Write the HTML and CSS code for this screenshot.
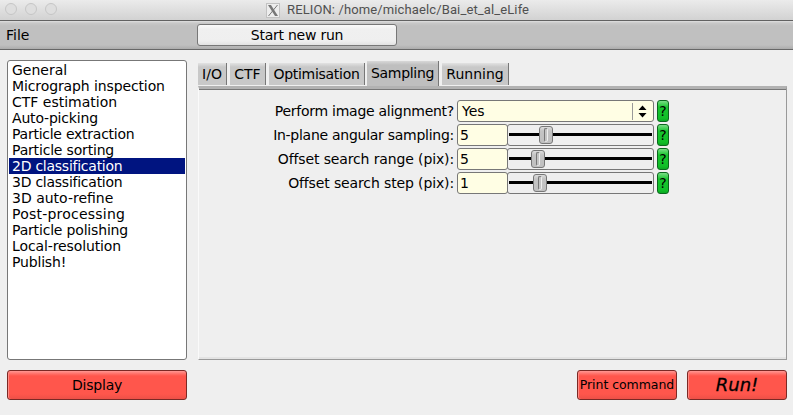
FILE: index.html
```
<!DOCTYPE html>
<html lang="en">
<head>
<meta charset="utf-8">
<title>RELION</title>
<link rel="stylesheet" href="styles.css">
</head>
<body>
<header class="titlebar">
  <div class="lights"><i></i><i></i><i></i></div>
  <svg class="xicon" width="14" height="15" viewBox="0 0 14 15"><rect x=".5" y=".5" width="13" height="14" fill="#ededed" stroke="#c2c2c2"/><path d="M2 2H5L12 13H9Z" fill="#777"/><path d="M11.500 2L2.500 13" stroke="#777" stroke-width="1"/></svg>
  <span class="title">RELION: /home/michaelc/Bai_et_al_eLife</span>
</header>
<nav class="menubar"><span class="file">File</span><button class="start">Start new run</button></nav>
<main class="main">
  <section class="left">
    <ul class="jobs">
      <li class="plain">General</li><li class="snug">Micrograph inspection</li><li class="plain">CTF estimation</li><li>Auto-picking</li><li class="tight">Particle extraction</li><li>Particle sorting</li><li class="selected tight">2D classification</li><li class="tight">3D classification</li><li class="plain">3D auto-refine</li><li class="loose">Post-processing</li><li>Particle polishing</li><li class="snug">Local-resolution</li><li>Publish!</li>
    </ul>
    <button class="red">Display</button>
  </section>
  <section class="right">
    <div class="tabs"><span class="tab io">I/O</span><span class="tab ctf">CTF</span><span class="tab opt">Optimisation</span><span class="tab sampling">Sampling</span><span class="tab running">Running</span></div>
    <div class="panel">
      <div class="row"><label>Perform image alignment?</label><div class="select"><span>Yes</span><svg width="21" height="20" viewBox="0 0 21 20"><path d="M.5 2V19" stroke="#999"/><path d="M6.500 9L10.500 4.500L14.500 9ZM6.500 12L10.500 16.500L14.500 12Z"/></svg></div><button class="help">?</button></div>
      <div class="row"><label>In-plane angular sampling:</label><div class="field">5</div><div class="slider"><i class="knob k1"></i></div><button class="help">?</button></div>
      <div class="row"><label class="offset">Offset search range (pix):</label><div class="field">5</div><div class="slider"><i class="knob k2"></i></div><button class="help">?</button></div>
      <div class="row"><label class="offset">Offset search step (pix):</label><div class="field">1</div><div class="slider"><i class="knob k3"></i></div><button class="help">?</button></div>
    </div>
    <div class="actions"><button class="red print">Print command</button><button class="red run">Run!</button></div>
  </section>
</main>
</body>
</html>
```
FILE: styles.css
```
*, *::before, *::after { box-sizing: border-box; }
body { margin: 0; width: 793px; height: 415px; overflow: hidden; background: #efefef; color: #000; font: 14px/16px "DejaVu Sans", sans-serif; }
button { margin: 0; padding: 0; color: #000; font: inherit; }
.titlebar { display: flex; height: 21px; border-bottom: 1px solid #626262; background: linear-gradient(#ebebeb, #d2d2d2); }
.lights { display: flex; gap: 8px; width: 266px; padding: 3px 0 0 5px; }
.lights i { width: 12px; height: 12px; border: 1px solid #c6c6c6; border-radius: 50%; background: #dedede; }
.xicon { margin-top: 3px; }
.title { margin-left: 7px; color: #505050; font: 13px/20px Roboto, sans-serif; letter-spacing: .12px; white-space: nowrap; }
.menubar { display: flex; align-items: flex-start; height: 29px; border-bottom: 1px solid #686868; background: linear-gradient(#e0e0e0, #c8c8c8 2px, #c0c0c0 5px, #c0c0c0 24px, #acacac); }
.file { width: 197px; padding: 6px 0 0 6px; }
.start { width: 200px; height: 22px; margin-top: 3px; border: 1px solid #777; border-radius: 3px; background: linear-gradient(#fafafa, #f0f0f0 4px, #efefef 16px, #e2e2e2); line-height: 20px; letter-spacing: -.25px; }
.main { display: flex; gap: 11px; padding: 10px 6px 0 7px; }
.left { display: flex; flex-direction: column; gap: 10px; width: 180px; }
.jobs { height: 300px; margin: 0; padding: 1px; border: 1px solid #777; border-radius: 3px; background: #fff; list-style: none; }
.jobs li { height: 16px; padding-left: 3px; letter-spacing: -.18px; white-space: nowrap; }
.jobs .plain { letter-spacing: 0; }
.jobs .snug { letter-spacing: -.11px; }
.jobs .tight { letter-spacing: -.25px; }
.jobs .loose { letter-spacing: .22px; }
.jobs .selected { background: #001480; color: #fff; }
.red { height: 30px; border: 1px solid #7b2925; border-radius: 3px; background: linear-gradient(#ff9893, #ff6d65 3px, #ff564c 5px, #ff564c 23px, #ed5047); box-shadow: inset 1px 0 #ff8b84; letter-spacing: -.2px; }
.right { display: flex; flex-direction: column; width: 589px; }
.tabs { display: flex; align-items: flex-end; gap: 3px; height: 26px; padding-bottom: 1px; }
.tab { height: 22px; border-right: 1px solid #777; background: linear-gradient(#e2e2e2, #c8c8c8 4px); line-height: 22px; text-align: center; white-space: nowrap; }
.io { width: 29px; }
.ctf { width: 36px; }
.opt { width: 96px; letter-spacing: -.28px; }
.sampling { width: 72px; height: 25px; margin: 0 0 -1px -1px; background: linear-gradient(#d8d8d8, #bfbfbf 4px); line-height: 24px; letter-spacing: -.3px; }
.running { width: 67px; }
.panel { display: flex; flex-direction: column; gap: 2px; height: 274px; padding-top: 11px; border: 1px solid #999; border-top: 3px solid #b2b2b2; border-left-color: #fafafa; box-shadow: inset 0 1px #777, inset 0 -2px #e3e3e3; }
.row { display: flex; height: 22px; }
.row label { width: 258px; padding-right: 3px; line-height: 22px; letter-spacing: -.27px; text-align: right; white-space: nowrap; }
.row .offset { letter-spacing: -.13px; }
.select, .field, .slider { height: 22px; border: 1px solid #777; border-radius: 3px; }
.select { display: flex; justify-content: space-between; width: 197px; padding-left: 4px; background: #fffee4; line-height: 20px; }
.field { width: 51px; padding-left: 2px; background: #fffee4; line-height: 20px; }
.slider { position: relative; width: 147px; margin-left: -1px; }
.slider::before { content: ""; display: block; height: 3px; margin: 8px 1px 0; background: #000; }
.knob { position: absolute; top: 1px; width: 14px; height: 18px; border: 1px solid #777; border-radius: 3px; background: linear-gradient(#ddd, #c4c4c4 4px, #c0c0c0); }
.knob::after { content: ""; position: absolute; left: 4px; top: 1px; width: 4px; height: 14px; border: 1px solid #777; border-right-color: #eee; border-bottom-color: #e4e4e4; border-radius: 2px; background: #c4c4c4; }
.k1 { left: 31px; }
.k2 { left: 23px; }
.k3 { left: 25px; }
.help { width: 12px; height: 22px; margin-left: 3px; border: 1px solid #0b671e; border-radius: 3px; background: linear-gradient(#7add87, #18c52e 6px, #10bf28 17px, #0ba922); line-height: 18px; }
.actions { display: flex; justify-content: flex-end; gap: 10px; margin-top: 10px; }
.print { width: 100px; font-size: 12.500px; letter-spacing: -.05px; white-space: nowrap; }
.run { width: 100px; font-size: 18px; font-style: italic; letter-spacing: 0; -webkit-text-stroke: .3px #000; }
```
